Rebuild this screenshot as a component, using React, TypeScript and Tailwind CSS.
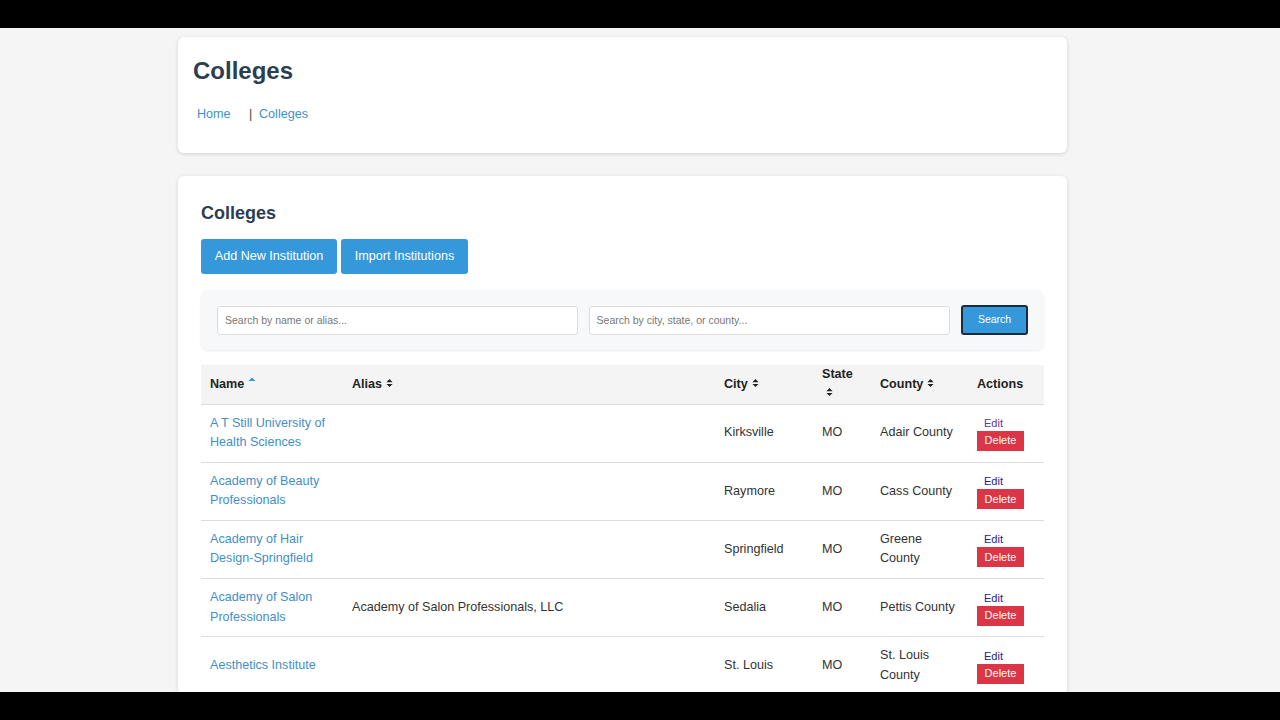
const rows = [
  { name: "A T Still University of Health Sciences", alias: "", city: "Kirksville", county: "Adair County", edit: "text-[#5a3a8c]" },
  { name: "Academy of Beauty Professionals", alias: "", city: "Raymore", county: "Cass County", edit: "text-[#23238e]" },
  { name: "Academy of Hair Design-Springfield", alias: "", city: "Springfield", county: "Greene County", edit: "text-[#23238e]" },
  { name: "Academy of Salon Professionals", alias: "Academy of Salon Professionals, LLC", city: "Sedalia", county: "Pettis County", edit: "text-[#23238e]" },
  { name: "Aesthetics Institute", alias: "", city: "St. Louis", county: "St. Louis County", edit: "text-[#23238e]" },
];

const SortIcon = ({ active }: { active?: boolean }) =>
  active ? (
    <svg viewBox="0 0 8 10" className="ml-[4px] inline-block h-[10px] w-[8px] align-[1px]">
      <path d="M0.5 4 L4 0.5 L7.5 4 Z" fill="#3498db" />
    </svg>
  ) : (
    <svg viewBox="0 0 8 10" className="ml-[4px] inline-block h-[10px] w-[7px] align-[0px]">
      <path d="M0.5 4 L4 0.5 L7.5 4 Z M0.5 6 L4 9.5 L7.5 6 Z" fill="#222222" />
    </svg>
  );

const headers = [
  { label: "Name", w: "w-[142px]", active: true },
  { label: "Alias", w: "w-[372px]" },
  { label: "City", w: "w-[98px]" },
  { label: "State", w: "w-[58px]" },
  { label: "County", w: "w-[97px]" },
];

export default function App() {
  return (
    <div className="flex h-screen flex-col overflow-hidden bg-[#f5f5f5] font-['Liberation_Sans',Arial,sans-serif] text-[12.6px] text-[#333333]">
      <div className="h-7 shrink-0 bg-black" />
      <div className="min-h-0 flex-1 overflow-hidden">
        <div className="ml-[178px] w-[889px] pt-[9px]">
          <div className="h-[116px] rounded-[6px] bg-white px-[15px] pt-[18px] shadow-[0_1px_4px_rgba(0,0,0,0.14)]">
            <h1 className="text-[24px] leading-[32px] font-bold text-[#2c3e50]">Colleges</h1>
            <div className="mt-[17px] flex pl-[4px] text-[12.6px] leading-[20px] text-[#3f8fc9]">
              <a className="w-[52px]">Home</a>
              <span className="w-[10px] text-[#444444]">|</span>
              <a>Colleges</a>
            </div>
          </div>

          <div className="mt-[23px] rounded-[6px] bg-white px-[23px] pt-[25px] shadow-[0_1px_4px_rgba(0,0,0,0.14)]">
            <h2 className="text-[18px] leading-[24px] font-bold text-[#2c3e50]">Colleges</h2>
            <div className="mt-[14px] flex gap-[4px]">
              <button className="h-[35px] w-[136px] rounded-[3px] bg-[#3498db] text-[12.6px] text-white">Add New Institution</button>
              <button className="h-[35px] w-[127px] rounded-[3px] bg-[#3498db] text-[12.6px] text-white">Import Institutions</button>
            </div>

            <div className="mt-[16px] flex h-[60px] items-center gap-[11px] rounded-[8px] bg-[#f7f8fa] pr-[16px] pl-[16px] shadow-[0_1px_3px_rgba(0,0,0,0.08)]">
              <input
                placeholder="Search by name or alias..."
                className="h-[29px] w-[361px] rounded-[3px] border border-[#dddddd] bg-white px-[7px] text-[10.5px] placeholder:text-[#777777]"
              />
              <input
                placeholder="Search by city, state, or county..."
                className="h-[29px] w-[362px] rounded-[3px] border border-[#dddddd] bg-white px-[7px] text-[10.5px] placeholder:text-[#777777]"
              />
              <button className="h-[30px] w-[67px] rounded-[3px] border-2 border-[#1c2c3c] bg-[#3498db] text-[10.5px] text-white">Search</button>
            </div>

            <table className="mt-[15px] w-[843px] table-fixed border-collapse">
              <thead>
                <tr className="h-[39px] border-b border-[#dddddd] bg-[#f4f4f4] text-left text-[12.6px] font-bold text-[#222222]">
                  {headers.map((h) => (
                    <th key={h.label} className={`${h.w} px-[9px] font-bold`}>
                      {h.label}
                      <SortIcon active={h.active} />
                    </th>
                  ))}
                  <th className="px-[9px] font-bold">Actions</th>
                </tr>
              </thead>
              <tbody>
                {rows.map((r) => (
                  <tr key={r.name} className="h-[58.2px] border-b border-[#dddddd] leading-[19.5px]">
                    <td className="px-[9px] text-[#3f8fc9]">{r.name}</td>
                    <td className="px-[9px]">{r.alias}</td>
                    <td className="px-[9px]">{r.city}</td>
                    <td className="px-[9px]">MO</td>
                    <td className="px-[9px]">{r.county}</td>
                    <td className="px-[9px]">
                      <div className={`pl-[7px] text-[11px] leading-[16px] ${r.edit}`}>Edit</div>
                      <button className="block h-[20px] w-[47px] bg-[#dc3545] text-[11px] text-white">Delete</button>
                    </td>
                  </tr>
                ))}
              </tbody>
            </table>
          </div>
        </div>
      </div>
      <div className="h-7 shrink-0 bg-black" />
    </div>
  );
}
